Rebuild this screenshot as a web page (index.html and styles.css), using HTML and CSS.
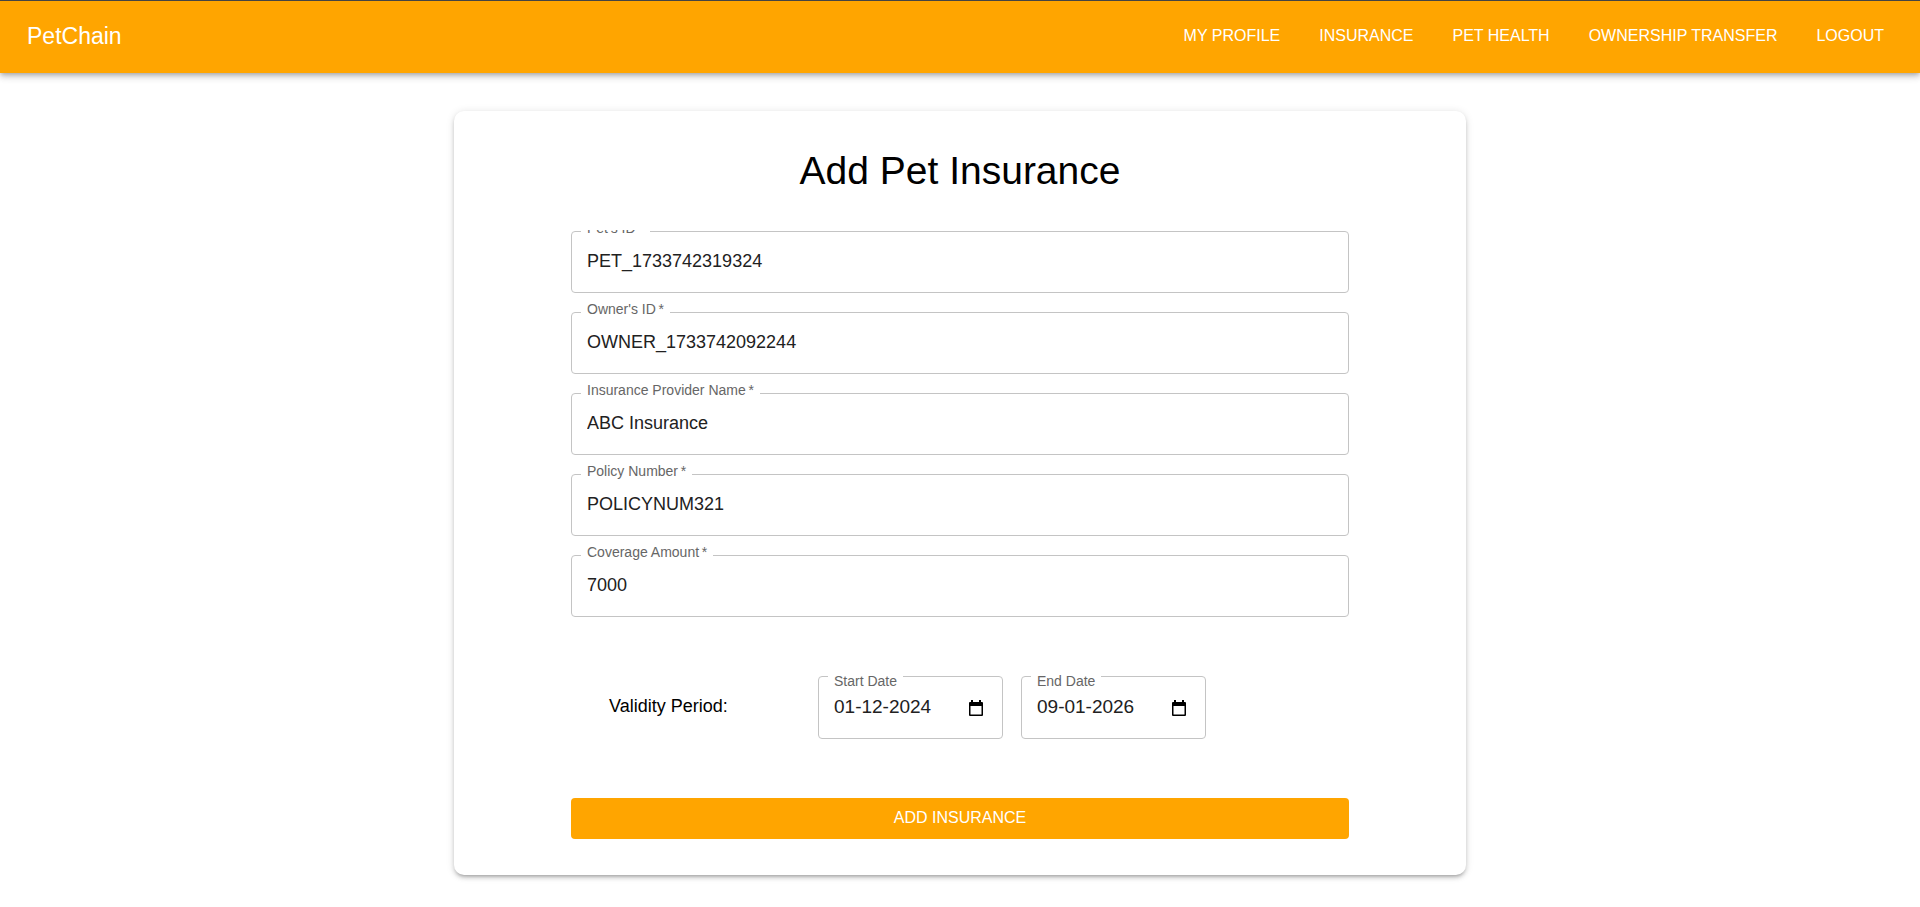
FILE: index.html
```html
<!DOCTYPE html>
<html lang="en">
<head>
  <meta charset="utf-8">
  <meta name="viewport" content="width=device-width, initial-scale=1">
  <title>PetChain</title>
  <link rel="stylesheet" href="styles.css">
</head>
<body>
  <header class="app-bar">
    <div class="brand">PetChain</div>
    <nav class="nav">
      <a class="nav-link" href="#profile">MY PROFILE</a>
      <a class="nav-link" href="#insurance">INSURANCE</a>
      <a class="nav-link" href="#health">PET HEALTH</a>
      <a class="nav-link" href="#transfer">OWNERSHIP TRANSFER</a>
      <a class="nav-link" href="#logout">LOGOUT</a>
    </nav>
  </header>

  <main class="page">
    <section class="card">
      <h1 class="title">Add Pet Insurance</h1>
      <form class="form">
        <div class="fields">
          <div class="field">
            <label class="label" for="pet">Pet's ID&thinsp;*</label>
            <input class="input" id="pet" type="text" value="PET_1733742319324">
          </div>
          <div class="field">
            <label class="label" for="owner">Owner's ID&thinsp;*</label>
            <input class="input" id="owner" type="text" value="OWNER_1733742092244">
          </div>
          <div class="field">
            <label class="label" for="provider">Insurance Provider Name&thinsp;*</label>
            <input class="input" id="provider" type="text" value="ABC Insurance">
          </div>
          <div class="field">
            <label class="label" for="policy">Policy Number&thinsp;*</label>
            <input class="input" id="policy" type="text" value="POLICYNUM321">
          </div>
          <div class="field">
            <label class="label" for="amount">Coverage Amount&thinsp;*</label>
            <input class="input" id="amount" type="text" value="7000">
          </div>
        </div>

        <div class="validity">
          <div class="validity-text">Validity Period:</div>
          <div class="field date-field">
            <label class="label" for="start">Start Date</label>
            <input class="input" id="start" type="text" value="01-12-2024">
            <button class="picker" type="button" aria-label="Choose start date">
              <svg class="calendar" viewBox="0 0 14 16"><path d="M2 0h2v2h6V0h2v2h1q1 0 1 1v12q0 1-1 1H1q-1 0-1-1V3q0-1 1-1h1zM1.500 6v8.500h11V6z" fill-rule="evenodd"/></svg>
            </button>
          </div>
          <div class="field date-field">
            <label class="label" for="end">End Date</label>
            <input class="input" id="end" type="text" value="09-01-2026">
            <button class="picker" type="button" aria-label="Choose end date">
              <svg class="calendar" viewBox="0 0 14 16"><path d="M2 0h2v2h6V0h2v2h1q1 0 1 1v12q0 1-1 1H1q-1 0-1-1V3q0-1 1-1h1zM1.500 6v8.500h11V6z" fill-rule="evenodd"/></svg>
            </button>
          </div>
        </div>

        <button class="submit" type="submit">ADD INSURANCE</button>
      </form>
    </section>
  </main>
</body>
</html>
```
FILE: styles.css
```css
* {
  box-sizing: border-box;
}

body {
  margin: 0;
  background: #fff;
  color: #000;
  font-family: "Liberation Sans", Arial, sans-serif;
}

.app-bar {
  display: flex;
  align-items: center;
  justify-content: space-between;
  padding: 21px 36px 23px 27px;
  border-top: 1px solid #444;
  background: #ffa500;
  color: #fff;
  box-shadow: 0 2px 4px -1px rgba(0, 0, 0, 0.2), 0 4px 6px rgba(0, 0, 0, 0.14), 0 1px 11px rgba(0, 0, 0, 0.12);
}

.brand {
  font-size: 23px;
  line-height: 28px;
}

.nav {
  display: flex;
  gap: 39px;
}

.nav-link {
  color: #fff;
  font-size: 16px;
  line-height: 28px;
  text-decoration: none;
}

.page {
  padding: 38px 18px 32px;
}

.card {
  max-width: 1012px;
  margin: 0 auto;
  padding: 37px 117px 36px;
  border-radius: 10px;
  background: #fff;
  box-shadow: 0 3px 3px -2px rgba(0, 0, 0, 0.2), 0 3px 4px rgba(0, 0, 0, 0.14), 0 1px 9px rgba(0, 0, 0, 0.12);
}

.title {
  margin: 0 0 36px;
  font-size: 39px;
  font-weight: 400;
  line-height: 46px;
  text-align: center;
}

.form {
  padding-top: 1px;
  overflow: hidden;
}

.fields {
  display: flex;
  flex-direction: column;
  gap: 19px;
}

.field {
  position: relative;
  display: flex;
  border: 1px solid #c4c4c4;
  border-radius: 4px;
}

.label {
  position: absolute;
  top: -12px;
  left: 9px;
  padding: 0 6px;
  background: #fff;
  color: #666;
  font-size: 14px;
  line-height: 16px;
}

.input {
  flex: 1;
  min-width: 0;
  height: 60px;
  padding: 19px 15px 21px;
  border: 0;
  outline: 0;
  background: transparent;
  color: #212121;
  font: 18px/20px "Liberation Sans", Arial, sans-serif;
}

.validity {
  display: grid;
  grid-template-columns: 191px 185px 185px;
  gap: 18px;
  align-items: center;
  margin: 59px 0;
  padding-left: 38px;
}

.validity-text {
  padding-bottom: 4px;
  font-size: 18px;
  line-height: 24px;
}

.date-field .label {
  top: -4px;
}

.date-field .input {
  height: 61px;
  padding-right: 0;
  font-size: 19px;
}

.picker {
  display: flex;
  align-items: center;
  padding: 0 19px 0 8px;
  border: 0;
  background: transparent;
}

.calendar {
  width: 14px;
  height: 16px;
}

.submit {
  display: block;
  width: 100%;
  padding: 7px 8px 9px;
  border: 0;
  border-radius: 4px;
  background: #ffa500;
  color: #fff;
  font: 16px/25px "Liberation Sans", Arial, sans-serif;
}
```
